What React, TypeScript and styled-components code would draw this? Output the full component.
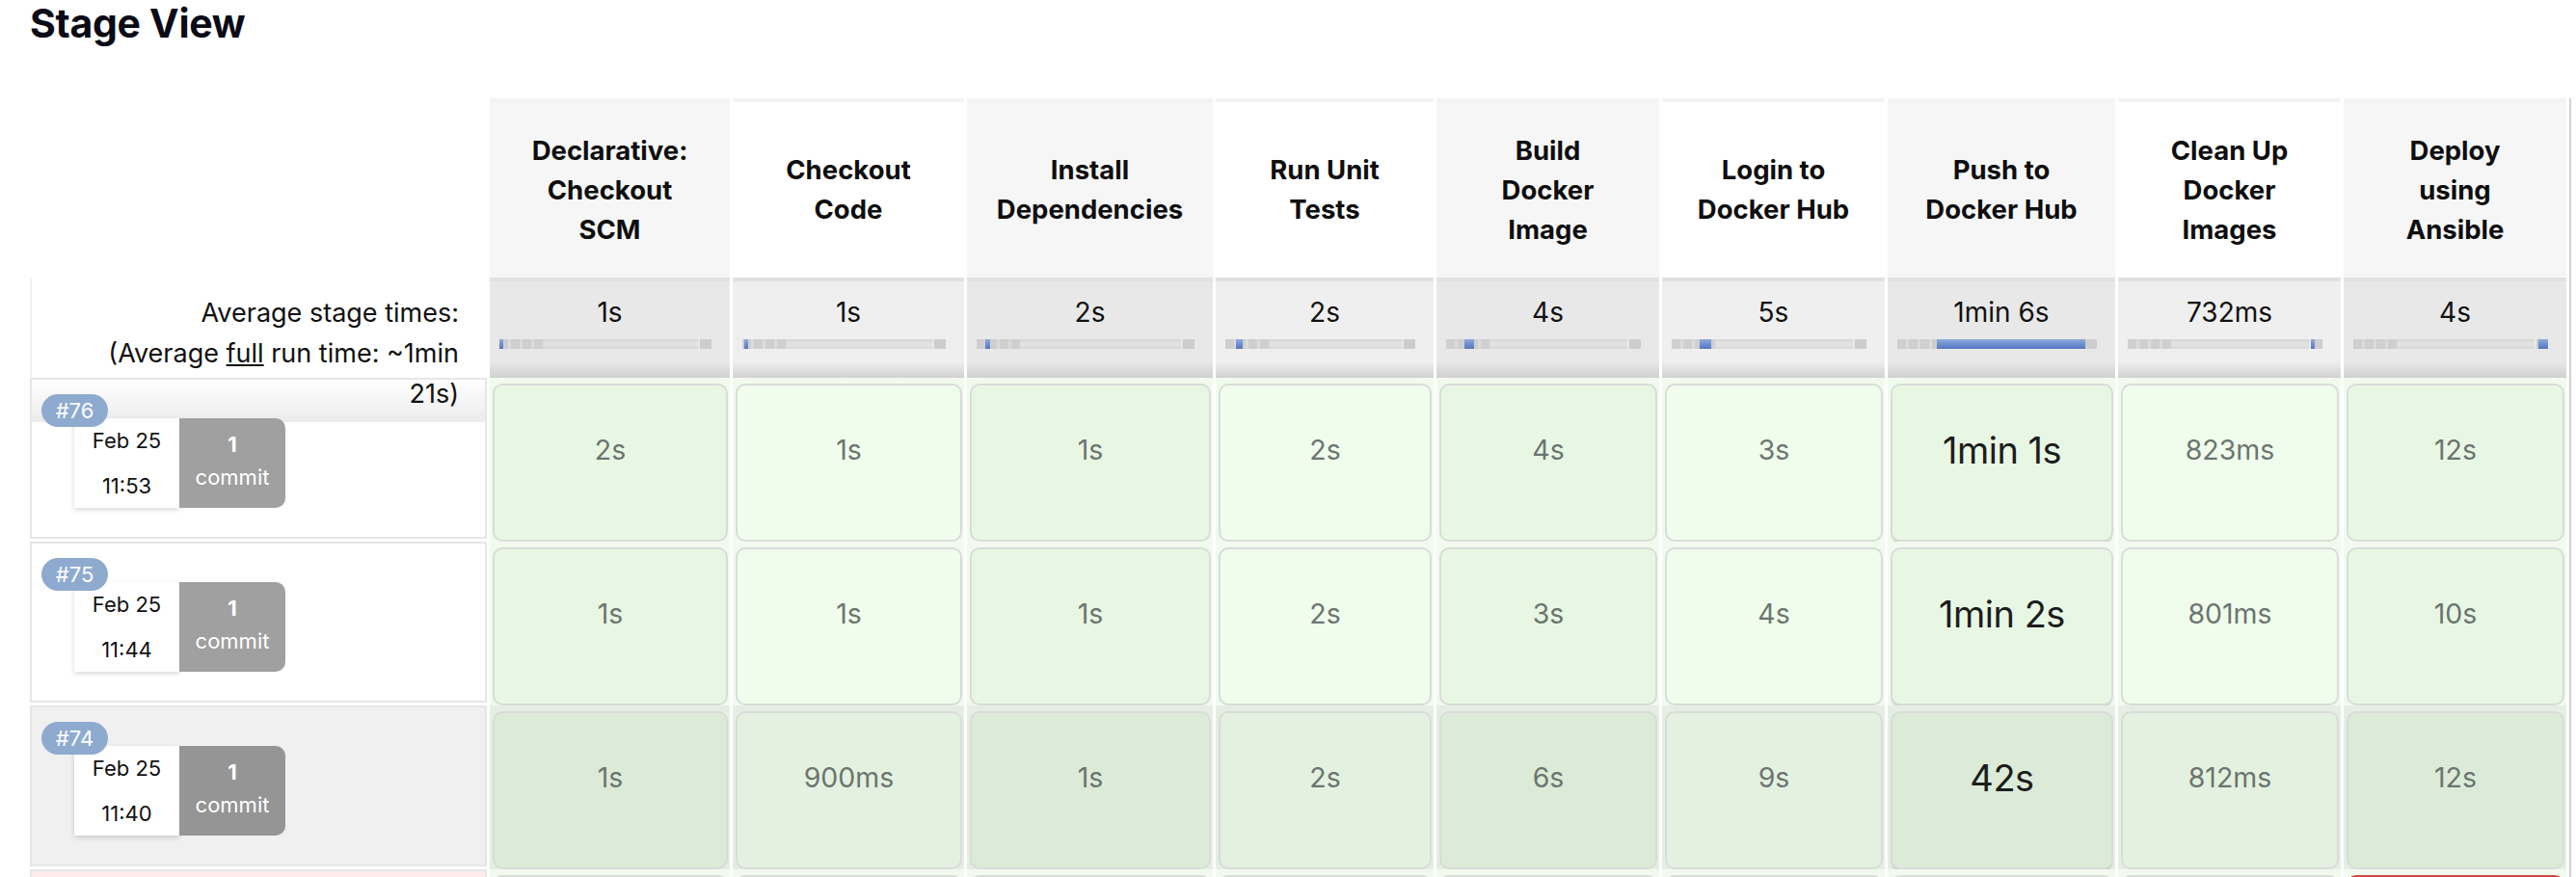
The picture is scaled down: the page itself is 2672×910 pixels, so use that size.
import React from "react";
import styled, { createGlobalStyle } from "styled-components";

const GlobalStyle = createGlobalStyle`
  html, body {
    margin: 0;
    padding: 0;
    background: #ffffff;
    overflow: hidden;
  }
  body {
    font-family: Inter, "Noto Sans", "Liberation Sans", sans-serif;
    color: #111;
  }
`;

type Tone = "plain" | "shaded" | "failed";

const STAGE_WIDTHS = [249, 240, 255, 226, 231, 231, 236, 231, 231];

const STAGES: { lines: string[]; avg: string; left: number; width: number }[] = [
  { lines: ["Declarative:", "Checkout", "SCM"], avg: "1s", left: 0, width: 2 },
  { lines: ["Checkout", "Code"], avg: "1s", left: 1, width: 2 },
  { lines: ["Install", "Dependencies"], avg: "2s", left: 4, width: 2 },
  { lines: ["Run Unit", "Tests"], avg: "2s", left: 5.6, width: 3.5 },
  { lines: ["Build", "Docker", "Image"], avg: "4s", left: 9.5, width: 5 },
  { lines: ["Login to", "Docker Hub"], avg: "5s", left: 14.4, width: 6 },
  { lines: ["Push to", "Docker Hub"], avg: "1min 6s", left: 20, width: 74 },
  { lines: ["Clean Up", "Docker", "Images"], avg: "732ms", left: 94, width: 2 },
  { lines: ["Deploy", "using", "Ansible"], avg: "4s", left: 95, width: 5 },
];

const EMPHASIS_COL = 6;

const BUILDS: { id: string; date: string; time: string; tone: Tone; times: string[] }[] = [
  { id: "#76", date: "Feb 25", time: "11:53", tone: "plain", times: ["2s", "1s", "1s", "2s", "4s", "3s", "1min 1s", "823ms", "12s"] },
  { id: "#75", date: "Feb 25", time: "11:44", tone: "plain", times: ["1s", "1s", "1s", "2s", "3s", "4s", "1min 2s", "801ms", "10s"] },
  { id: "#74", date: "Feb 25", time: "11:40", tone: "shaded", times: ["1s", "900ms", "1s", "2s", "6s", "9s", "42s", "812ms", "12s"] },
];

/* the next (failed) run, only its top edge is in view */
const PARTIAL_FAILED_COL = 8;

const Page = styled.div`
  padding: 0 0 0 31px;
`;

const Title = styled.h2`
  margin: 0;
  font-size: 41px;
  line-height: 48px;
  font-weight: 700;
  color: #0b0b16;
  letter-spacing: -0.3px;
`;

const Table = styled.div`
  margin-top: 54px;
  display: grid;
  grid-template-columns: 474px ${STAGE_WIDTHS.map((w) => `${w}px`).join(" ")};
  grid-template-rows: 186px 104px repeat(4, 170px);
  column-gap: 3px;
  width: max-content;
  padding-right: 3px;
  border-right: 2px solid #d4d4d4;
`;

const Corner = styled.div`
  background: #ffffff;
`;

const StageHeader = styled.div<{ $alt: boolean }>`
  border-top: 4px solid #f3f3f3;
  background: ${(p) => (p.$alt ? "#ffffff" : "#f6f6f6")};
  display: flex;
  flex-direction: column;
  align-items: center;
  justify-content: center;
  text-align: center;
  font-size: 27.5px;
  line-height: 41px;
  font-weight: 700;
  color: #0e0e0e;
`;

const HeaderLine = styled.span`
  display: block;
  white-space: nowrap;
`;

const AvgLabel = styled.div`
  position: relative;
  z-index: 1;
  border-left: 2px solid #f2f2f2;
  padding: 16px 29px 0 0;
  text-align: right;
  font-size: 27px;
  line-height: 42px;
  color: #111;
`;

const LabelLine = styled.span`
  display: block;
  white-space: nowrap;
`;

const Underlined = styled.span`
  text-decoration: underline;
`;

const AvgCell = styled.div<{ $alt: boolean }>`
  padding-top: 16px;
  box-shadow: inset 0 4px 0 #e1e1e1;
  background: ${(p) => {
    const c = p.$alt ? "#efefef" : "#e8e8e8";
    return `linear-gradient(to bottom, ${c} 0, ${c} 84%, #d0d0d0 100%)`;
  }};
  text-align: center;
  font-size: 28px;
  line-height: 40px;
  color: #111;
`;

const Bar = styled.div`
  position: relative;
  height: 10px;
  margin: 8px 19px 0 10px;
  background: linear-gradient(to bottom, #d6d6d6 0, #e4e4e4 50%, #d8d8d8 100%);
  overflow: hidden;
`;

const BarTicks = styled.div`
  position: absolute;
  left: 0;
  top: 0;
  bottom: 0;
  width: 46px;
  background: repeating-linear-gradient(
    to right,
    #cacaca 0,
    #cacaca 9px,
    #dadada 9px,
    #dadada 12px
  );
  opacity: 0.75;
`;

const BarEnd = styled.div`
  position: absolute;
  right: 0;
  top: 0;
  bottom: 0;
  width: 12px;
  background: #cdcdcd;
  border-left: 2px solid #e8e8e8;
`;

const BarFill = styled.div`
  position: absolute;
  top: 0;
  bottom: 0;
  min-width: 4px;
  background: linear-gradient(to bottom, #8eaadc 0, #6c8dd0 55%, #5677bf 100%);
`;

const toneBg: Record<Tone, string> = {
  plain: "#ffffff",
  shaded: "#f0f0f0",
  failed: "#fdeceb",
};

const BuildCell = styled.div<{ $tone: Tone; $first: boolean }>`
  position: relative;
  margin-bottom: 3px;
  border: 2px solid #e6e6e6;
  background: ${(p) =>
    p.$first
      ? `linear-gradient(to bottom, #ffffff 0, #ebebeb 100%) 0 0 / 100% 44px no-repeat, ${toneBg[p.$tone]}`
      : toneBg[p.$tone]};
`;

const Badge = styled.div`
  position: absolute;
  left: 10px;
  top: 15px;
  width: 69px;
  height: 34px;
  border-radius: 17px;
  background: #8eabcf;
  color: #ffffff;
  font-size: 22px;
  line-height: 34px;
  text-align: center;
`;

const BuildInfo = styled.div`
  display: flex;
  margin: 40px 0 0 44px;
  width: max-content;
`;

const DateBox = styled.div`
  width: 109px;
  height: 93px;
  background: #ffffff;
  box-shadow: 0 2px 5px rgba(0, 0, 0, 0.16);
  display: flex;
  flex-direction: column;
  justify-content: space-around;
  align-items: center;
  font-size: 22px;
  line-height: 30px;
  color: #111;
`;

const CommitBox = styled.div<{ $dark: boolean }>`
  box-sizing: border-box;
  width: 110px;
  height: 93px;
  padding-bottom: 6px;
  background: ${(p) => (p.$dark ? "#959595" : "#a0a0a0")};
  border-radius: 0 10px 10px 0;
  color: #ffffff;
  display: flex;
  flex-direction: column;
  justify-content: center;
  align-items: center;
  font-size: 22px;
  line-height: 34px;
`;

const CommitCount = styled.span`
  font-weight: 700;
`;

const StageCell = styled.div<{ $tone: Tone }>`
  padding: 6px 2px 0 3px;
  background: ${(p) => (p.$tone === "shaded" ? "#e6eee4" : "#f2faf0")};
`;

const boxBg = (tone: Tone, alt: boolean, failed: boolean) => {
  if (failed) return "#f6d3d0";
  if (tone === "shaded") return alt ? "#e4f1e0" : "#dcebd8";
  return alt ? "#f0fded" : "#e8f7e4";
};

const StageBox = styled.div<{ $tone: Tone; $alt: boolean; $emph: boolean; $failed: boolean }>`
  box-sizing: border-box;
  height: 164px;
  border: 2px solid ${(p) => (p.$failed ? "#cf4a41" : "#d9dcd8")};
  border-radius: 10px;
  background: ${(p) => boxBg(p.$tone, p.$alt, p.$failed)};
  box-shadow: ${(p) => (p.$emph ? "0 3px 2px -1px rgba(0,0,0,0.16)" : "none")};
  padding-top: 47px;
  text-align: center;
  font-size: ${(p) => (p.$emph ? "38px" : "28.5px")};
  line-height: 40px;
  letter-spacing: ${(p) => (p.$emph ? "-0.5px" : "0")};
  color: ${(p) => (p.$emph ? "#1b1d1c" : "#6c7570")};
`;

export default function App() {
  return (
    <>
      <GlobalStyle />
      <Page>
        <Title>Stage View</Title>
        <Table>
          <Corner />
          {STAGES.map((s, i) => (
            <StageHeader key={`h${i}`} $alt={i % 2 === 1}>
              {s.lines.map((l) => (
                <HeaderLine key={l}>{l}</HeaderLine>
              ))}
            </StageHeader>
          ))}

          <AvgLabel>
            <LabelLine>Average stage times:</LabelLine>
            <LabelLine>
              (Average <Underlined>full</Underlined> run time: ~1min
            </LabelLine>
            <LabelLine>21s)</LabelLine>
          </AvgLabel>
          {STAGES.map((s, i) => (
            <AvgCell key={`a${i}`} $alt={i % 2 === 1}>
              {s.avg}
              <Bar>
                <BarTicks />
                <BarEnd />
                <BarFill style={{ left: `${s.left}%`, width: `${s.width}%` }} />
              </Bar>
            </AvgCell>
          ))}

          {BUILDS.map((b, r) => (
            <React.Fragment key={b.id}>
              <BuildCell $tone={b.tone} $first={r === 0}>
                <BuildInfo>
                  <DateBox>
                    <span>{b.date}</span>
                    <span>{b.time}</span>
                  </DateBox>
                  <CommitBox $dark={b.tone === "shaded"}>
                    <CommitCount>1</CommitCount>
                    <span>commit</span>
                  </CommitBox>
                </BuildInfo>
                <Badge>{b.id}</Badge>
              </BuildCell>
              {b.times.map((t, i) => (
                <StageCell key={`${b.id}-${i}`} $tone={b.tone}>
                  <StageBox
                    $tone={b.tone}
                    $alt={i % 2 === 1}
                    $emph={i === EMPHASIS_COL}
                    $failed={false}
                  >
                    {t}
                  </StageBox>
                </StageCell>
              ))}
            </React.Fragment>
          ))}

          <BuildCell $tone="failed" $first={false} />
          {STAGES.map((_, i) => (
            <StageCell key={`p${i}`} $tone="plain">
              <StageBox
                $tone="plain"
                $alt={i % 2 === 1}
                $emph={i === EMPHASIS_COL}
                $failed={i === PARTIAL_FAILED_COL}
              />
            </StageCell>
          ))}
        </Table>
      </Page>
    </>
  );
}
